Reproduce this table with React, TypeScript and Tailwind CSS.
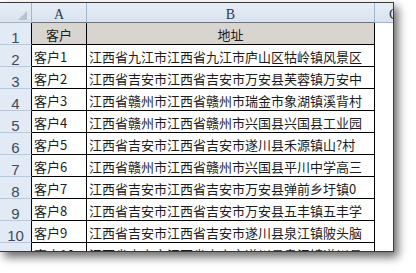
const ROWS = [
  ["客户1", "江西省九江市江西省九江市庐山区牯岭镇风景区"],
  ["客户2", "江西省吉安市江西省吉安市万安县芙蓉镇万安中"],
  ["客户3", "江西省赣州市江西省赣州市瑞金市象湖镇溪背村"],
  ["客户4", "江西省赣州市江西省赣州市兴国县兴国县工业园"],
  ["客户5", "江西省吉安市江西省吉安市遂川县禾源镇山?村"],
  ["客户6", "江西省赣州市江西省赣州市兴国县平川中学高三"],
  ["客户7", "江西省吉安市江西省吉安市万安县弹前乡圩镇0"],
  ["客户8", "江西省吉安市江西省吉安市万安县五丰镇五丰学"],
  ["客户9", "江西省吉安市江西省吉安市遂川县泉江镇陂头脑"],
  ["客户10", "江西省吉安市江西省吉安市遂川县泉江镇遂川县"],
];

const cjk = "font-['Noto_Sans_CJK_SC',sans-serif] text-[13px] leading-[13px] text-[#1c1c1c]";

function RowHead({ n }: { n: number }) {
  return (
    <div className="flex w-[32px] shrink-0 items-end justify-center border-r border-b border-r-black border-b-[#b9c9dc] bg-[#e2eaf5] font-['Liberation_Sans',sans-serif] text-[15px] leading-[12px] text-[#3e4a5c]">
      {n}
    </div>
  );
}

export default function App() {
  return (
    <div className="h-[273px] w-[416px] bg-white pt-[2px]">
      <div className="h-[250px] w-[394px] overflow-hidden border-t border-r border-b border-[#3a3a3a] bg-white shadow-[4px_5px_9px_rgba(0,0,0,0.6)]">
        {/* column headers */}
        <div className="flex h-[20px] bg-gradient-to-b from-[#e6edf6] to-[#d8e2ee] font-['Liberation_Serif',serif] text-[14px] leading-[12px] text-[#2f3a48]">
          <div className="relative w-[32px] shrink-0 border-r border-b border-[#9eb6ce]">
            <svg className="absolute right-[4px] bottom-[2px]" width="9" height="9" viewBox="0 0 9 9">
              <polygon points="9,0 9,9 0,9" fill="#b6c2d1" />
            </svg>
          </div>
          <div className="flex w-[55px] shrink-0 items-end justify-center border-r border-b border-r-[#9eb6ce] border-b-[#6b7380] pb-[1px]">A</div>
          <div className="flex w-[288px] shrink-0 items-end justify-center border-r border-b border-r-[#9eb6ce] border-b-[#6b7380] pb-[1px]">B</div>
          <div className="flex flex-1 items-end border-b border-[#9eb6ce] pb-[1px] pl-[14px]">C</div>
        </div>

        {/* title row */}
        <div className="flex h-[22px]">
          <RowHead n={1} />
          <div className={`flex w-[55px] shrink-0 items-end justify-center border-r border-b border-black bg-[#d8d5d0] pb-[3px] ${cjk}`}>客户</div>
          <div className={`flex w-[288px] shrink-0 items-end justify-center border-r border-b border-black bg-[#d8d5d0] pb-[3px] ${cjk}`}>地址</div>
          <div className="flex-1 bg-white" />
        </div>

        {ROWS.map(([name, addr], i) => (
          <div key={name} className="flex h-[22px]">
            <RowHead n={i + 2} />
            <div className={`flex w-[55px] shrink-0 items-end overflow-hidden border-r border-b border-black pb-[3px] pl-[2px] whitespace-nowrap ${cjk}`}>{name}</div>
            <div className={`flex w-[288px] shrink-0 items-end overflow-hidden border-r border-b border-black pb-[3px] pl-[2px] whitespace-nowrap ${cjk}`}>{addr}</div>
            <div className="flex-1 bg-white" />
          </div>
        ))}
      </div>
    </div>
  );
}
